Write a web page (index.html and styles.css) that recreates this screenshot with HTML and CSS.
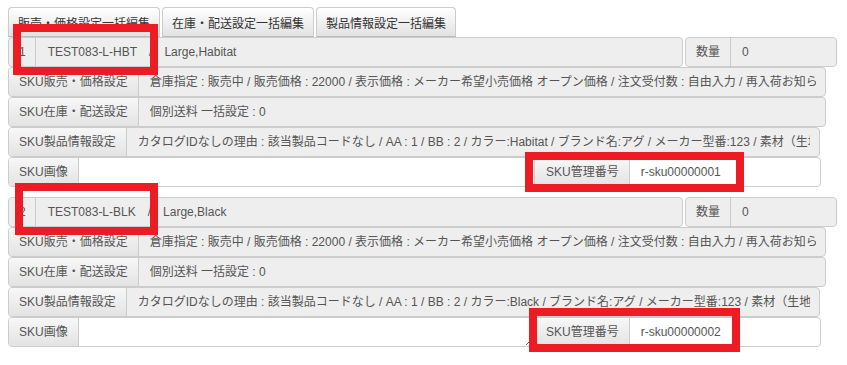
FILE: index.html
```html
<!DOCTYPE html>
<html lang="ja">
<head>
    <meta charset="UTF-8">
    <meta name="viewport" content="width=device-width, initial-scale=1.0">
    <title>SKU一括編集</title>
    <link rel="stylesheet" href="styles.css">
</head>
<body>
    <div class="page">
        <div class="tabs">
            <button type="button" class="tab">販売・価格設定一括編集</button>
            <button type="button" class="tab">在庫・配送設定一括編集</button>
            <button type="button" class="tab">製品情報設定一括編集</button>
        </div>

        <!-- SKU 1 -->
        <div class="sku">
            <div class="head">
                <div class="row main">
                    <span class="cell num">1</span>
                    <span class="cell code">TEST083-L-HBT<span class="slash">/</span>Large,Habitat</span>
                </div>
                <div class="row qty">
                    <span class="cell label-plain">数量</span>
                    <span class="cell qty-value">0</span>
                </div>
            </div>
            <div class="row setting">
                <span class="cell label">SKU販売・価格設定</span>
                <span class="value">倉庫指定 : 販売中 / 販売価格 : 22000 / 表示価格 : メーカー希望小売価格 オープン価格 / 注文受付数 : 自由入力 / 再入荷お知らせメール : 受け付けない</span>
            </div>
            <div class="row setting">
                <span class="cell label">SKU在庫・配送設定</span>
                <span class="value">個別送料 一括設定 : 0</span>
            </div>
            <div class="row info">
                <span class="cell label">SKU製品情報設定</span>
                <span class="value">カタログIDなしの理由 : 該当製品コードなし / AA : 1 / BB : 2 / カラー:Habitat / ブランド名:アグ / メーカー型番:123 / 素材（生地）:綿</span>
            </div>
            <div class="row image">
                <span class="cell label">SKU画像</span>
                <textarea class="image-input"></textarea>
                <div class="sku-id">
                    <span class="cell label id-label">SKU管理番号</span>
                    <span class="id-value">r-sku00000001</span>
                </div>
            </div>
        </div>

        <!-- SKU 2 -->
        <div class="sku">
            <div class="head">
                <div class="row main">
                    <span class="cell num">2</span>
                    <span class="cell code">TEST083-L-BLK<span class="slash">/</span>Large,Black</span>
                </div>
                <div class="row qty">
                    <span class="cell label-plain">数量</span>
                    <span class="cell qty-value">0</span>
                </div>
            </div>
            <div class="row setting">
                <span class="cell label">SKU販売・価格設定</span>
                <span class="value">倉庫指定 : 販売中 / 販売価格 : 22000 / 表示価格 : メーカー希望小売価格 オープン価格 / 注文受付数 : 自由入力 / 再入荷お知らせメール : 受け付けない</span>
            </div>
            <div class="row setting">
                <span class="cell label">SKU在庫・配送設定</span>
                <span class="value">個別送料 一括設定 : 0</span>
            </div>
            <div class="row info">
                <span class="cell label">SKU製品情報設定</span>
                <span class="value">カタログIDなしの理由 : 該当製品コードなし / AA : 1 / BB : 2 / カラー:Black / ブランド名:アグ / メーカー型番:123 / 素材（生地）:綿</span>
            </div>
            <div class="row image">
                <span class="cell label">SKU画像</span>
                <textarea class="image-input"></textarea>
                <div class="sku-id">
                    <span class="cell label id-label">SKU管理番号</span>
                    <span class="id-value">r-sku00000002</span>
                </div>
            </div>
        </div>

        <!-- red highlight marks -->
        <div class="mark mark-1"></div>
        <div class="mark mark-2"></div>
        <div class="mark mark-3"></div>
        <div class="mark mark-4"></div>
    </div>
</body>
</html>
```

FILE: styles.css
```css
/* Global */
body {
    margin: 0;
    font-family: "Liberation Sans", "Noto Sans CJK JP", sans-serif;
    font-size: 12px;
    color: #555;
    background: #fff;
}

.page {
    position: relative;
    padding: 7px 8px;
}

/* Tabs */
.tabs {
    display: flex;
    gap: 2px;
    height: 30px;
}

.tab {
    font: inherit;
    color: #333;
    padding: 0 9px;
    border: 1px solid #ccc;
    border-bottom-color: #bbb;
    border-radius: 4px 4px 0 0;
    background: linear-gradient(#fff, #e2e2e2);
    cursor: pointer;
}

/* SKU block */
.sku {
    margin-bottom: 10px;
}

.row {
    display: flex;
    box-sizing: border-box;
    height: 30px;
    line-height: 28px;
    border: 1px solid #ccc;
    border-radius: 4px;
    background: #eee;
    overflow: hidden;
}

.cell {
    padding: 0 10px;
    border-right: 1px solid #ccc;
    white-space: nowrap;
}

.label {
    background: linear-gradient(#f7f7f7, #e3e3e3);
}

.value {
    flex: 1;
    min-width: 0;
    margin: 0 9px 0 11px;
    white-space: nowrap;
    overflow: hidden;
}

/* Header row */
.head {
    display: flex;
    gap: 2px;
    width: 829px;
}

.main {
    flex: 1;
}

.num {
    padding: 0 9px 0 10px;
}

.code {
    flex: 1;
    border-right: none;
    padding-left: 12px;
}

.slash {
    margin: 0 12px;
}

.qty {
    width: 152px;
}

.label-plain {
    padding: 0 10px;
}

.qty-value {
    flex: 1;
    border-right: none;
    padding-left: 11px;
}

/* Setting rows */
.setting {
    width: 818px;
}

.info {
    width: 812px;
}

/* Image row */
.image {
    width: 813px;
    background: #fff;
}

.image-input {
    flex: 1;
    box-sizing: border-box;
    height: 28px;
    border: none;
    padding: 2px;
    background: transparent;
    font: inherit;
}

.sku-id {
    display: flex;
    width: 286px;
}

.id-label {
    border-left: 1px solid #ccc;
    padding: 0 10px 0 11px;
}

.id-value {
    flex: 1;
    padding-left: 11px;
    color: #555;
}

/* Red annotation boxes */
.mark {
    position: absolute;
    box-sizing: border-box;
    border: 8px solid #ed1c24;
}

.mark-1 {
    left: 13px;
    top: 24px;
    width: 145px;
    height: 51px;
}

.mark-2 {
    left: 525px;
    top: 152px;
    width: 219px;
    height: 40px;
}

.mark-3 {
    left: 15px;
    top: 183px;
    width: 143px;
    height: 52px;
}

.mark-4 {
    left: 529px;
    top: 308px;
    width: 211px;
    height: 44px;
}
```
